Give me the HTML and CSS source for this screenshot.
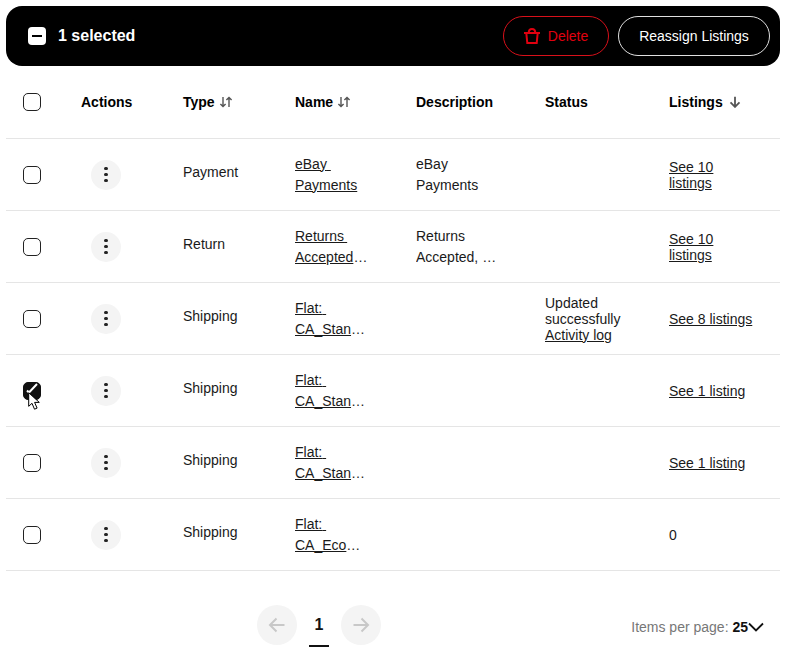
FILE: index.html
```html
<!DOCTYPE html>
<html lang="en">
<head>
<meta charset="utf-8">
<title>Policies</title>
<link rel="stylesheet" href="styles.css">
</head>
<body>
<div class="page">
  <div class="bar">
    <span class="bar-check"><span class="bar-minus"></span></span>
    <span class="bar-count">1 selected</span>
    <button class="btn btn-delete">
      <svg class="trash" viewBox="0 0 16 16" width="16" height="16" fill="none" stroke="currentColor" stroke-width="2"><path d="M0 5h16M2.300 5l1 10h9.400l1-10M4.700 5C4.700 2.500 5.500 1 8 1s3.300 1.500 3.300 4"/></svg>
      Delete
    </button>
    <button class="btn btn-reassign">Reassign Listings</button>
  </div>

  <div class="row head">
    <div class="c-check"><span class="box"></span></div>
    <div>Actions</div>
    <div class="sort">Type <svg class="sort-icon" viewBox="0 0 14 12" width="14" height="12" fill="none" stroke="currentColor" stroke-width="1.4"><path d="M4 1v9.5M1.400 8L4 10.600 6.600 8M10 11V1.500M7.400 4L10 1.400 12.600 4"/></svg></div>
    <div class="sort">Name <svg class="sort-icon" viewBox="0 0 14 12" width="14" height="12" fill="none" stroke="currentColor" stroke-width="1.4"><path d="M4 1v9.5M1.400 8L4 10.600 6.600 8M10 11V1.500M7.400 4L10 1.400 12.600 4"/></svg></div>
    <div>Description</div>
    <div>Status</div>
    <div class="sort sort-wide">Listings <svg class="down-icon" viewBox="0 0 12 12" width="12" height="12" fill="none" stroke="currentColor" stroke-width="1.800"><path d="M6 .8v10M1.500 6.400L6 10.900l4.500-4.500"/></svg></div>
  </div>

  <div class="row">
    <div class="c-check"><span class="box"></span></div>
    <div><button class="more"><span></span><span></span><span></span></button></div>
    <div class="type">Payment</div>
    <div class="clamp name"><a href="#">eBay Payments</a></div>
    <div class="clamp desc">eBay Payments</div>
    <div></div>
    <div class="tight"><a href="#">See 10 listings</a></div>
  </div>

  <div class="row">
    <div class="c-check"><span class="box"></span></div>
    <div><button class="more"><span></span><span></span><span></span></button></div>
    <div class="type">Return</div>
    <div class="clamp name"><a href="#">Returns Accepted, Seller, 30 Days</a></div>
    <div class="clamp desc">Returns Accepted, Seller, 30 Days</div>
    <div></div>
    <div class="tight"><a href="#">See 10 listings</a></div>
  </div>

  <div class="row">
    <div class="c-check"><span class="box"></span></div>
    <div><button class="more"><span></span><span></span><span></span></button></div>
    <div class="type">Shipping</div>
    <div class="clamp name"><a href="#">Flat: CA_StandardDelivery</a></div>
    <div></div>
    <div class="tight status">Updated successfully <a href="#">Activity log</a></div>
    <div class="tight"><a href="#">See 8 listings</a></div>
  </div>

  <div class="row">
    <div class="c-check">
      <span class="box box-on"><svg viewBox="0 0 18 18" width="18" height="18" fill="none" stroke="#fff" stroke-width="2"><path d="M4 9.500l2 2L14 3"/></svg></span>
      <svg class="cursor" viewBox="0 0 13 18" width="13" height="18"><path d="M.700.700v13.600l3.300-3 2.500 5.900 2.600-1.100-2.500-5.700h4.700z" fill="#fff" stroke="#000" stroke-width="1"/></svg>
    </div>
    <div><button class="more"><span></span><span></span><span></span></button></div>
    <div class="type">Shipping</div>
    <div class="clamp name"><a href="#">Flat: CA_StandardDelivery</a></div>
    <div></div>
    <div></div>
    <div class="tight"><a href="#">See 1 listing</a></div>
  </div>

  <div class="row">
    <div class="c-check"><span class="box"></span></div>
    <div><button class="more"><span></span><span></span><span></span></button></div>
    <div class="type">Shipping</div>
    <div class="clamp name"><a href="#">Flat: CA_StandardDelivery</a></div>
    <div></div>
    <div></div>
    <div class="tight"><a href="#">See 1 listing</a></div>
  </div>

  <div class="row">
    <div class="c-check"><span class="box"></span></div>
    <div><button class="more"><span></span><span></span><span></span></button></div>
    <div class="type">Shipping</div>
    <div class="clamp name name-narrow"><a href="#">Flat: CA_EconomyDelivery</a></div>
    <div></div>
    <div></div>
    <div class="tight">0</div>
  </div>

  <div class="footer">
    <div class="pager">
      <button class="nav"><svg viewBox="0 0 18 18" width="18" height="18" fill="none" stroke="currentColor" stroke-width="2"><path d="M16.500 9H2M8.500 2.500L2 9l6.500 6.500"/></svg></button>
      <span class="current">1</span>
      <button class="nav"><svg viewBox="0 0 18 18" width="18" height="18" fill="none" stroke="currentColor" stroke-width="2"><path d="M1.500 9H16M9.500 2.500L16 9l-6.500 6.500"/></svg></button>
    </div>
    <div class="per-page">Items per page: <b>25</b><svg viewBox="0 0 16 10" width="16" height="10" fill="none" stroke="#111" stroke-width="1.800"><path d="M1 1.500l7 7 7-7"/></svg></div>
  </div>
</div>
</body>
</html>
```

FILE: styles.css
```css
* {
  box-sizing: border-box;
}

html, body {
  margin: 0;
  background: #fff;
}

body {
  font-family: "Liberation Sans", Arial, sans-serif;
  font-size: 14px;
  color: #1a1a1a;
}

.page {
  width: 774px;
  margin: 6px 0 0 6px;
}

a {
  color: inherit;
  text-decoration: underline;
}

button {
  font-family: inherit;
  cursor: pointer;
}

.bar {
  height: 60px;
  background: #000;
  border-radius: 16px;
  display: flex;
  align-items: center;
  padding: 0 10px 0 22px;
  color: #fff;
}

.bar-check {
  width: 18px;
  height: 18px;
  background: #fff;
  border-radius: 4px;
  display: flex;
  align-items: center;
  justify-content: center;
}

.bar-minus {
  width: 10px;
  height: 2.500px;
  background: #000;
}

.bar-count {
  margin-left: 12px;
  font-size: 16px;
  font-weight: 700;
  margin-right: auto;
}

.btn {
  height: 40px;
  border-radius: 20px;
  background: #000;
  font-size: 14px;
  display: flex;
  align-items: center;
  justify-content: center;
}

.btn-delete {
  width: 106px;
  border: 1px solid #d8101a;
  color: #e0000f;
  gap: 8px;
}

.btn-reassign {
  width: 152px;
  margin-left: 9px;
  border: 1px solid #e0e0e0;
  color: #fff;
}

.row {
  display: grid;
  grid-template-columns: 75px 102px 112px 121px 129px 124px 111px;
  height: 72px;
  align-items: center;
  border-bottom: 1px solid #e5e5e5;
  line-height: 16px;
}

.head {
  height: 73px;
  font-weight: 700;
  color: #000;
}

.c-check {
  padding-left: 17px;
  display: flex;
  position: relative;
}

.box {
  width: 18px;
  height: 18px;
  border: 1.300px solid #222;
  border-radius: 5px;
  background: #fff;
  display: block;
}

.box-on {
  background: #111;
  border-color: #111;
}

.box-on svg {
  display: block;
  margin: -1.300px;
}

.cursor {
  position: absolute;
  left: 22px;
  top: 10px;
}

.sort {
  display: flex;
  align-items: center;
  gap: 4px;
}

.sort-wide {
  gap: 6px;
}

.sort-icon, .down-icon {
  color: #555;
}

.more {
  width: 30px;
  height: 30px;
  margin-left: 10px;
  border: 0;
  border-radius: 50%;
  background: #f4f4f4;
  display: flex;
  flex-direction: column;
  align-items: center;
  justify-content: center;
  gap: 2.500px;
  padding: 0;
}

.more span {
  width: 3.500px;
  height: 3.500px;
  border-radius: 50%;
  background: #222;
}

.type {
  padding-bottom: 5px;
}

.clamp {
  line-height: 21px;
  display: -webkit-box;
  -webkit-box-orient: vertical;
  -webkit-line-clamp: 2;
  overflow: hidden;
  white-space: pre-wrap;
  overflow-wrap: anywhere;
}

.name {
  width: 75px;
}

.name-narrow {
  width: 72px;
}

.desc {
  width: 82px;
}

.tight {
  line-height: 16px;
  padding-right: 24px;
}

.status {
  padding-right: 40px;
}

.footer {
  display: flex;
  align-items: flex-start;
  justify-content: space-between;
  margin-top: 34px;
  padding-left: 251px;
  padding-right: 16px;
}

.pager {
  display: flex;
  align-items: flex-start;
  gap: 12px;
}

.nav {
  width: 40px;
  height: 40px;
  border: 0;
  border-radius: 50%;
  background: #f4f4f4;
  color: #c8c8c8;
  padding: 0;
  display: flex;
  align-items: center;
  justify-content: center;
}

.current {
  width: 20px;
  height: 42px;
  padding-top: 11px;
  line-height: 18px;
  text-align: center;
  font-weight: 700;
  font-size: 16px;
  color: #111;
  border-bottom: 2px solid #111;
}

.per-page {
  color: #777;
  display: flex;
  align-items: center;
  height: 40px;
  margin-top: 2px;
  white-space: pre;
}

.per-page b {
  color: #111;
}
```
